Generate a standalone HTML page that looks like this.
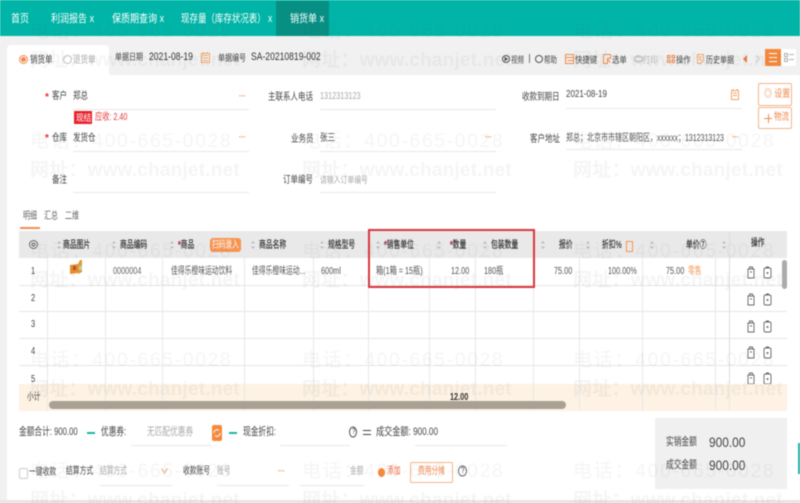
<!DOCTYPE html>
<html lang="zh"><head><meta charset="utf-8"><style>
html,body{margin:0;padding:0}
body{width:800px;height:503px;overflow:hidden;position:relative;background:#f1f1f1;font-family:"Liberation Sans","Noto Sans CJK SC",sans-serif;color:#444}
#p{position:absolute;left:0;top:0;width:800px;height:503px;filter:blur(.4px);overflow:hidden}
b,i,u,em{position:absolute;display:block;font-weight:normal;font-style:normal;text-decoration:none}
i{white-space:nowrap;transform:scaleX(.75);transform-origin:0 50%;font-size:10px;line-height:12px;height:12px;color:#444}
i s{text-decoration:none;color:#e5283b;font-weight:bold}
.w{position:absolute;white-space:nowrap;font-size:19px;line-height:24px;color:rgba(90,90,90,.06);letter-spacing:1.8px;z-index:50;height:24px}
.n{letter-spacing:.2px;font-weight:bold}
.g{color:#aaa}.o{color:#f08a4b}.t{color:#fff;font-size:11px;line-height:14px;height:14px;transform:scaleX(.82)}
.k{transform:scaleX(.68);color:#333;-webkit-text-stroke:.2px #333}
.c{transform:scaleX(.68);color:#555}
.d{transform:scaleX(.73);color:#555}
.e{transform:scaleX(.67)}
.f{transform:scaleX(.78);font-size:11px;color:#333}
.m{transform:scaleX(.7);font-size:11px;color:#444}
.x{transform:scaleX(.82);font-size:9px}
.v{width:1px;background:#e8e8e8;top:231px;height:180px}
.h{height:1px;background:#e6e6e6;left:19px;width:768px}
.l{height:1px;background:#e8e8e8}
svg{position:absolute;overflow:visible}
</style></head><body><div id="p">
<b style="left:0;top:0;width:800px;height:36px;background:#00b5a7"></b>
<b style="left:276px;top:1px;width:53px;height:35px;background:#078f84"></b>
<i class="t" style="left:11px;top:12px">首页</i>
<i class="t" style="left:51px;top:12px">利润报告 x</i>
<i class="t" style="left:112px;top:12px">保质期查询 x</i>
<i class="t" style="left:181px;top:12px;transform:scaleX(.77)">现存量（库存状况表） x</i>
<i class="t" style="left:290px;top:12px">销货单 x</i>

<b style="left:7px;top:75px;width:793px;height:425px;background:#fff"></b>
<b style="left:7px;top:45px;width:102px;height:31px;background:#fff;border-radius:4px 4px 0 0"></b>
<b style="left:0;top:500px;width:800px;height:3px;background:#e6e6e6"></b>

<b style="left:19px;top:55px;width:7px;height:7px;border:1px solid #f08a4b;border-radius:50%"></b>
<b style="left:21px;top:57px;width:5px;height:5px;background:#f08a4b;border-radius:50%"></b>
<i style="left:30px;top:55px">销货单</i>
<b style="left:63px;top:55px;width:7px;height:7px;border:1px solid #bbb;border-radius:50%"></b>
<i class="g" style="left:73px;top:55px">退货单</i>
<i class="x" style="left:115px;top:51px;transform:scaleX(.78)">单据日期</i>
<i class="f" style="left:149px;top:51px">2021-08-19</i>
<svg style="left:201px;top:52px" width="9" height="11" fill="none" stroke="#f0a468"><rect x=".5" y="1.500" width="8" height="9"/><path d="M2 3.500h5M2 6h5M2 8.500h5M2.500 0v2M6.500 0v2"/></svg>
<i class="x" style="left:218px;top:52px;transform:scaleX(.78)">单据编号</i>
<i class="f" style="left:251px;top:51px">SA-20210819-002</i>

<svg style="left:502px;top:55px" width="8" height="8" fill="none" stroke="#555"><circle cx="4" cy="4" r="3.500"/><path d="M3 2.500l2.200 1.500-2.200 1.500z" fill="#555"/></svg>
<i class="x" style="left:511px;top:54px;transform:scaleX(.72)">视频</i>
<b style="left:529px;top:54px;width:1px;height:9px;background:#777"></b>
<svg style="left:535px;top:55px" width="8" height="8" fill="none" stroke="#555"><circle cx="4" cy="4" r="3.500"/></svg>
<i class="x" style="left:544px;top:54px;transform:scaleX(.72)">帮助</i>
<svg style="left:565px;top:54px" width="9" height="10" fill="none" stroke="#f08a4b"><rect x=".5" y=".5" width="8" height="9"/><path d="M.5 3.500h8M2.500 6.500h6"/></svg>
<i class="x" style="left:575px;top:54px">快捷键</i>
<svg style="left:603px;top:54px" width="8" height="10" fill="none" stroke="#f08a4b"><path d="M.5.500h7v4h-3v5h-4zM5 6l2.500 2.500"/></svg>
<i class="x" style="left:612px;top:54px">选单</i>
<svg style="left:634px;top:55px" width="9" height="8" fill="none" stroke="#c4c4c4"><rect x=".5" y="2" width="8" height="4"/><circle cx="4.500" cy="4" r="3.500"/></svg>
<i class="x" style="left:643px;top:54px;color:#bbb">打印</i>
<svg style="left:667px;top:55px" width="8" height="8" fill="none" stroke="#f08a4b"><rect x=".5" y=".5" width="2.500" height="2.500"/><rect x="5" y=".5" width="2.500" height="2.500"/><rect x=".5" y="5" width="2.500" height="2.500"/><rect x="5" y="5" width="2.500" height="2.500"/></svg>
<i class="x" style="left:676px;top:54px">操作</i>
<svg style="left:697px;top:54px" width="7" height="10" fill="none" stroke="#f0a468"><path d="M.5.500h6v6l-3 3h-3zM2 3h3M2 5.500h3"/></svg>
<i class="x" style="left:706px;top:54px;transform:scaleX(.78)">历史单据</i>
<svg style="left:743px;top:55px" width="4" height="8"><path d="M4 0v8L0 4z" fill="#ee7a3a"/></svg>
<svg style="left:756px;top:55px" width="4" height="8" fill="none" stroke="#ccc"><path d="M.5 .5l3 3.500-3 3.500"/></svg>
<b style="left:765px;top:49px;width:16px;height:17px;background:#f5893b"></b>
<b style="left:769px;top:53px;width:8px;height:1px;background:#fff"></b>
<b style="left:769px;top:57px;width:8px;height:1px;background:#fff"></b>
<b style="left:769px;top:61px;width:8px;height:1px;background:#fff"></b>
<b style="left:781px;top:49px;width:15px;height:17px;background:#fff"></b>
<svg style="left:784px;top:53px" width="10" height="9" fill="none" stroke="#999" stroke-width=".8"><rect x=".5" y=".5" width="3" height="3"/><rect x=".5" y="5.500" width="3" height="3"/><path d="M5 1.500h5M5 6.500h5"/></svg>

<i style="left:45px;top:92px;transform:none"><s>*</s></i>
<i style="left:52px;top:91px">客户</i>
<i style="left:73px;top:91px">郑总</i>
<i class="o" style="left:239px;top:90px;font-weight:bold;font-size:9px">···</i>
<b class="l" style="left:73px;top:109px;width:176px"></b>
<i style="left:268px;top:92px">主联系人电话</i>
<i class="g" style="left:320px;top:91px;transform:scaleX(.73)">1312313123</i>
<b class="l" style="left:320px;top:109px;width:176px"></b>
<i style="left:522px;top:92px">收款到期日</i>
<i style="left:566px;top:89px;transform:scaleX(.8)">2021-08-19</i>
<svg style="left:731px;top:89px" width="8" height="11" fill="none" stroke="#f0a468"><rect x=".5" y="1.500" width="7" height="9"/><path d="M2 4h4M2 6.500h4M2 0v2M6 0v2"/></svg>
<b class="l" style="left:566px;top:108px;width:176px"></b>
<b style="left:758px;top:83px;width:32px;height:21px;border:1px solid #f3b48c;border-radius:2px;background:#fff"></b>
<i class="o" style="left:764px;top:89px;transform:scaleX(.8)">◎ 设置</i>
<b style="left:758px;top:107px;width:32px;height:20px;border:1px solid #f3b48c;border-radius:2px;background:#fff"></b>
<b style="left:764px;top:118px;width:8px;height:1px;background:#f08a4b"></b>
<b style="left:768px;top:114px;width:1px;height:9px;background:#f08a4b"></b>
<i class="o" style="left:774px;top:112px;">物流</i>

<b style="left:74px;top:111px;width:18px;height:13px;background:#e8222c"></b>
<i style="left:76px;top:112px;color:#fff;font-size:9px;transform:scaleX(.85)">现结</i>
<i style="left:95px;top:112px;color:#e5383b;transform:scaleX(.72)">应收: 2.40</i>

<i style="left:45px;top:133px;transform:none"><s>*</s></i>
<i style="left:52px;top:133px">仓库</i>
<i style="left:73px;top:133px">发货仓</i>
<i class="o" style="left:239px;top:131px;font-weight:bold;font-size:9px">···</i>
<b class="l" style="left:73px;top:151px;width:176px"></b>
<i style="left:291px;top:134px">业务员</i>
<i style="left:320px;top:133px">张三</i>
<i class="o" style="left:485px;top:131px;font-weight:bold;font-size:9px">···</i>
<b class="l" style="left:320px;top:151px;width:176px"></b>
<i style="left:530px;top:134px">客户地址</i>
<i class="c" style="left:566px;top:133px;transform:scaleX(.7)">郑总；北京市市辖区朝阳区，xxxxxx；1312313123</i>
<i class="o" style="left:732px;top:131px;font-weight:bold;font-size:9px">···</i>
<b class="l" style="left:566px;top:149px;width:176px"></b>

<i style="left:52px;top:175px">备注</i>
<b class="l" style="left:73px;top:192px;width:176px"></b>
<i style="left:283px;top:175px">订单编号</i>
<i class="g x" style="left:320px;top:174px;transform:scaleX(.76);color:#aaa">请输入订单编号</i>
<b class="l" style="left:320px;top:192px;width:176px"></b>

<i style="left:23px;top:211px;color:#666;transform:scaleX(.7)">明细</i>
<i style="left:44px;top:211px;color:#666;transform:scaleX(.7)">汇总</i>
<i style="left:65px;top:211px;color:#666;transform:scaleX(.7)">二维</i>
<b style="left:20px;top:227px;width:20px;height:2px;background:#f0904f"></b>

<!-- table -->
<b style="left:19px;top:231px;width:768px;height:27px;background:#e9e9e9"></b>
<b class="h" style="top:285px"></b><b class="h" style="top:311px"></b><b class="h" style="top:338px"></b><b class="h" style="top:365px"></b>
<b class="v" style="left:47px"></b><b class="v" style="left:105px"></b><b class="v" style="left:162px"></b><b class="v" style="left:244px"></b><b class="v" style="left:313px"></b><b class="v" style="left:368px"></b><b class="v" style="left:429px"></b><b class="v" style="left:475px"></b><b class="v" style="left:533px"></b><b class="v" style="left:579px"></b><b class="v" style="left:642px"></b><b class="v" style="left:715px"></b><b class="v" style="left:729px;background:#dedede"></b>

<svg style="left:29px;top:240px" width="9" height="9" fill="none" stroke="#666"><circle cx="4.500" cy="4.500" r="4"/><circle cx="4.500" cy="4.500" r="1.500"/></svg>
<i class="k" style="left:63px;top:240px">商品图片</i>
<i class="k" style="left:120px;top:240px">商品编码</i>
<i class="k" style="left:178px;top:240px"><s>*</s>商品</i>
<b style="left:210px;top:238px;width:31px;height:14px;background:#f79450;border-radius:3px"></b>
<i class="e" style="left:212px;top:240px;color:#fff">扫码录入</i>
<i class="k" style="left:259px;top:240px">商品名称</i>
<i class="k" style="left:328px;top:240px">规格型号</i>
<i class="k" style="left:384px;top:240px"><s>*</s>销售单位</i>
<i class="k" style="left:450px;top:240px"><s>*</s>数量</i>
<i class="k" style="left:491px;top:240px">包装数量</i>
<i class="k" style="left:559px;top:240px">报价</i>
<i class="k" style="left:602px;top:240px">折扣%</i>
<b style="left:626px;top:241px;width:5px;height:9px;border:1px solid #f79450"></b>
<i class="k" style="left:686px;top:240px">单价⑦</i>
<i class="k" style="left:751px;top:238px">操作</i>
<svg style="left:0;top:0" width="800" height="503" fill="#bdbdbd"><defs></defs>
<path d="M57 243.500l2-2.500 2 2.500zM57 246.500l2 2.500 2-2.500zM112 243.500l2-2.500 2 2.500zM112 246.500l2 2.500 2-2.500zM170 243.500l2-2.500 2 2.500zM170 246.500l2 2.500 2-2.500zM251 243.500l2-2.500 2 2.500zM251 246.500l2 2.500 2-2.500zM320 243.500l2-2.500 2 2.500zM320 246.500l2 2.500 2-2.500zM376 243.500l2-2.500 2 2.500zM376 246.500l2 2.500 2-2.500zM437 243.500l2-2.500 2 2.500zM437 246.500l2 2.500 2-2.500zM483 243.500l2-2.500 2 2.500zM483 246.500l2 2.500 2-2.500zM541 243.500l2-2.500 2 2.500zM541 246.500l2 2.500 2-2.500zM586 243.500l2-2.500 2 2.500zM586 246.500l2 2.500 2-2.500zM650 243.500l2-2.500 2 2.500zM650 246.500l2 2.500 2-2.500zM722 243.500l2-2.500 2 2.500zM722 246.500l2 2.500 2-2.500z"/></svg>

<i style="left:31px;top:266px">1</i>
<i style="left:31px;top:293px">2</i>
<i style="left:31px;top:319px">3</i>
<i style="left:31px;top:346px">4</i>
<i style="left:31px;top:374px">5</i>
<svg style="left:70px;top:260px" width="13" height="15"><path d="M0 5l8-1v9l-8 1z" fill="#ea8a2e"/><path d="M8 4l2-4h2v12l-4 2z" fill="#e09a30"/><path d="M3 6h3v4H3z" fill="#a05a2a"/><path d="M9 6h3v4H9z" fill="#bfc9c2"/></svg>
<i class="d" style="left:113px;top:266px;color:#666">0000004</i>
<i class="c" style="left:171px;top:266px">佳得乐橙味运动饮料</i>
<i class="c" style="left:252px;top:266px">佳得乐橙味运动...</i>
<i class="d" style="left:321px;top:266px">600ml</i>
<i class="c" style="left:376px;top:266px;transform:scaleX(.72)">箱(1箱 = 15瓶)</i>
<i class="d" style="left:451px;top:266px">12.00</i>
<i class="d" style="left:484px;top:266px">180瓶</i>
<i class="d" style="left:554px;top:266px">75.00</i>
<i class="d" style="left:608px;top:266px">100.00%</i>
<i class="d" style="left:666px;top:266px">75.00</i>
<i class="e" style="left:688px;top:266px;color:#f39a56">零售</i>

<svg style="left:747px;top:266px" width="28" height="120" fill="none" stroke="#666" stroke-width=".9">
<g><path d="M1 3h6v9H1zM2.500 3V1h3v2M3 6h2"/><rect x="17" y="2" width="7" height="10" rx="1.500"/><path d="M19 1h3M19.500 7h2M20.500 6v2"/></g>
<g transform="translate(0,27)"><path d="M1 3h6v9H1zM2.500 3V1h3v2M3 6h2"/><rect x="17" y="2" width="7" height="10" rx="1.500"/><path d="M19 1h3M19.500 7h2M20.500 6v2"/></g>
<g transform="translate(0,54)"><path d="M1 3h6v9H1zM2.500 3V1h3v2M3 6h2"/><rect x="17" y="2" width="7" height="10" rx="1.500"/><path d="M19 1h3M19.500 7h2M20.500 6v2"/></g>
<g transform="translate(0,80)"><path d="M1 3h6v9H1zM2.500 3V1h3v2M3 6h2"/><rect x="17" y="2" width="7" height="10" rx="1.500"/><path d="M19 1h3M19.500 7h2M20.500 6v2"/></g>
<g transform="translate(0,106)"><path d="M1 3h6v9H1zM2.500 3V1h3v2M3 6h2"/><rect x="17" y="2" width="7" height="10" rx="1.500"/><path d="M19 1h3M19.500 7h2M20.500 6v2"/></g>
</svg>
<b style="left:782px;top:260px;width:5px;height:29px;background:#ababab;border-radius:3px"></b>

<!-- subtotal -->
<b style="left:19px;top:384px;width:768px;height:27px;background:#fdf2e3"></b>
<b class="v" style="left:47px;top:384px;height:27px"></b><b class="v" style="left:105px;top:384px;height:27px"></b><b class="v" style="left:162px;top:384px;height:27px"></b><b class="v" style="left:244px;top:384px;height:27px"></b><b class="v" style="left:313px;top:384px;height:27px"></b><b class="v" style="left:368px;top:384px;height:27px"></b><b class="v" style="left:429px;top:384px;height:27px"></b><b class="v" style="left:475px;top:384px;height:27px"></b><b class="v" style="left:533px;top:384px;height:27px"></b><b class="v" style="left:579px;top:384px;height:27px"></b><b class="v" style="left:642px;top:384px;height:27px"></b><b class="v" style="left:715px;top:384px;height:27px"></b><b class="v" style="left:729px;top:384px;height:27px"></b>
<i class="e" style="left:27px;top:392px">小计</i>
<b style="left:49px;top:401px;width:517px;height:8px;background:#a9a193;border-radius:4px"></b>
<i class="d" style="left:450px;top:392px;font-weight:bold;color:#333">12.00</i>

<b style="left:368px;top:229px;width:163px;height:55px;border:2px solid #d9363c"></b>

<!-- footer -->
<i class="m" style="left:19px;top:426px">金额合计: 900.00</i>
<b style="left:87px;top:432px;width:8px;height:2px;background:#1cb3a6"></b>
<i class="m" style="left:101px;top:426px">优惠券:</i>
<i class="m" style="left:147px;top:426px;color:#aaa">无匹配优惠券</i>
<b class="l" style="left:131px;top:445px;width:80px"></b>
<b style="left:212px;top:425px;width:10px;height:16px;background:#f5893b;border-radius:2px"></b>
<svg style="left:213px;top:428px" width="8" height="10" fill="none" stroke="#fff"><path d="M1 5a3 3 0 0 1 5-2.500M7 5a3 3 0 0 1-5 2.500"/></svg>
<b style="left:229px;top:432px;width:8px;height:2px;background:#1cb3a6"></b>
<i class="m" style="left:243px;top:426px">现金折扣:</i>
<b class="l" style="left:280px;top:445px;width:70px"></b>
<svg style="left:349px;top:426px" width="9" height="12" fill="none" stroke="#555"><ellipse cx="4" cy="6" rx="3.500" ry="5"/></svg>
<i style="left:352px;top:426px;font-size:8px">?</i>
<b style="left:363px;top:430px;width:8px;height:1px;background:#444"></b>
<b style="left:363px;top:434px;width:8px;height:1px;background:#444"></b>
<i class="m" style="left:376px;top:426px;transform:scaleX(.74)">成交金额: 900.00</i>
<b class="l" style="left:415px;top:445px;width:92px"></b>

<b style="left:19px;top:468px;width:7px;height:9px;border:1px solid #ccc;border-radius:2px"></b>
<i class="c" style="left:29px;top:467px;color:#444">一键收款</i>
<i class="c" style="left:66px;top:466px;color:#444">结算方式</i>
<i class="e g" style="left:100px;top:466px">结算方式</i>
<svg style="left:161px;top:468px" width="7" height="6" fill="none" stroke="#f0a468"><path d="M.5.500L3.500 5l3-4.500"/></svg>
<b class="l" style="left:100px;top:485px;width:72px"></b>
<i class="c" style="left:183px;top:466px;color:#444">收款账号</i>
<i class="e g" style="left:217px;top:466px">账号</i>
<i class="o" style="left:278px;top:465px;font-weight:bold;font-size:9px">···</i>
<b class="l" style="left:217px;top:485px;width:72px"></b>
<i class="e g" style="left:350px;top:466px">金额</i>
<b class="l" style="left:300px;top:485px;width:64px"></b>
<b style="left:378px;top:468px;width:7px;height:9px;background:#f5893b;border-radius:50%"></b>
<i class="e" style="left:387px;top:466px;color:#f0653b">添加</i>
<b style="left:410px;top:462px;width:41px;height:19px;border:1px solid #f3b48c;border-radius:2px"></b>
<i class="e" style="left:418px;top:466px;color:#f08a4b">费用分摊</i>
<svg style="left:458px;top:465px" width="9" height="12" fill="none" stroke="#666"><ellipse cx="4.500" cy="6" rx="4" ry="5"/></svg>
<i style="left:461px;top:465px;font-size:8px">?</i>

<b style="left:655px;top:418px;width:132px;height:71px;background:#f0f0f0"></b>
<i class="m" style="left:666px;top:436px">实销金额</i>
<i style="left:709px;top:434px;font-size:14px;line-height:16px;height:16px;transform:scaleX(.85)">900.00</i>
<i class="m" style="left:666px;top:459px">成交金额</i>
<i style="left:709px;top:457px;font-size:14px;line-height:16px;height:16px;transform:scaleX(.85)">900.00</i>
<b style="left:798px;top:443px;width:2px;height:31px;background:#19b5a7"></b>

<!-- watermark -->
<em class="w" style="left:30px;top:20px">电话：400-665-0028</em><em class="w" style="left:302px;top:20px">电话：400-665-0028</em><em class="w" style="left:573px;top:20px">电话：400-665-0028</em>
<em class="w n" style="left:30px;top:49px">网址：www.chanjet.net</em><em class="w n" style="left:302px;top:49px">网址：www.chanjet.net</em><em class="w n" style="left:573px;top:49px">网址：www.chanjet.net</em>
<em class="w" style="left:30px;top:130px">电话：400-665-0028</em><em class="w" style="left:302px;top:130px">电话：400-665-0028</em><em class="w" style="left:573px;top:130px">电话：400-665-0028</em>
<em class="w n" style="left:30px;top:159px">网址：www.chanjet.net</em><em class="w n" style="left:302px;top:159px">网址：www.chanjet.net</em><em class="w n" style="left:573px;top:159px">网址：www.chanjet.net</em>
<em class="w" style="left:30px;top:240px">电话：400-665-0028</em><em class="w" style="left:302px;top:240px">电话：400-665-0028</em><em class="w" style="left:573px;top:240px">电话：400-665-0028</em>
<em class="w n" style="left:30px;top:269px">网址：www.chanjet.net</em><em class="w n" style="left:302px;top:269px">网址：www.chanjet.net</em><em class="w n" style="left:573px;top:269px">网址：www.chanjet.net</em>
<em class="w" style="left:30px;top:349px">电话：400-665-0028</em><em class="w" style="left:302px;top:349px">电话：400-665-0028</em><em class="w" style="left:573px;top:349px">电话：400-665-0028</em>
<em class="w n" style="left:30px;top:378px">网址：www.chanjet.net</em><em class="w n" style="left:302px;top:378px">网址：www.chanjet.net</em><em class="w n" style="left:573px;top:378px">网址：www.chanjet.net</em>
<em class="w" style="left:30px;top:460px">电话：400-665-0028</em><em class="w" style="left:302px;top:460px">电话：400-665-0028</em><em class="w" style="left:573px;top:460px">电话：400-665-0028</em>
<em class="w n" style="left:30px;top:489px">网址：www.chanjet.net</em><em class="w n" style="left:302px;top:489px">网址：www.chanjet.net</em><em class="w n" style="left:573px;top:489px">网址：www.chanjet.net</em>
</div></body></html>
